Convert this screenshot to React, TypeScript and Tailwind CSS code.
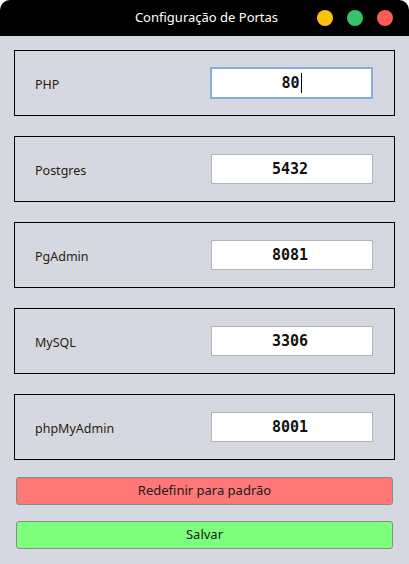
const ports = [
  { name: "PHP", value: "80", focused: true },
  { name: "Postgres", value: "5432" },
  { name: "PgAdmin", value: "8081" },
  { name: "MySQL", value: "3306" },
  { name: "phpMyAdmin", value: "8001" },
];

const App = () => {
  return (
    <div className="w-[409px] h-[564px] bg-white overflow-hidden font-['Noto_Sans',sans-serif]">
      <div className="flex flex-col h-full bg-[#d5d8e0] rounded-t-[10px] overflow-hidden">
        <header className="relative h-[36px] bg-black flex items-center justify-center shrink-0">
          <span className="text-white text-[13px] pl-[4px]">Configuração de Portas</span>
          <div className="absolute right-[16px] top-[10px] flex gap-[14px]">
            <span className="w-[16px] h-[16px] rounded-full bg-[#fcc10e]" />
            <span className="w-[16px] h-[16px] rounded-full bg-[#35c46a]" />
            <span className="w-[16px] h-[16px] rounded-full bg-[#fb5d55]" />
          </div>
        </header>

        <div className="flex flex-col gap-[20px] px-[14px] pt-[14px]">
          {ports.map((port) => (
            <div
              key={port.name}
              className="h-[66px] border border-black flex items-center justify-between pl-[20px] pr-[21px]"
            >
              <span className="text-[12.5px] text-[#2a1a10] pt-[4px]">{port.name}</span>
              <div
                className={
                  port.focused
                    ? "w-[163px] h-[32px] bg-white border-2 border-[#85aedb] flex items-center justify-center"
                    : "w-[162px] h-[30px] bg-white border border-[#b4b4b4] flex items-center justify-center"
                }
              >
                <span className="font-['DejaVu_Sans_Mono',monospace] font-bold text-[15px] text-[#111] mr-[4px]">
                  {port.value}
                </span>
                {port.focused && <span className="w-px h-[20px] bg-black -ml-[3px]" />}
              </div>
            </div>
          ))}
        </div>

        <div className="flex flex-col gap-[16px] px-[16px] pt-[17px]">
          <button className="h-[28px] rounded-[3px] border border-[#8a8a8a] bg-[#ff7878] text-[13px] text-[#1a1a1a]">
            Redefinir para padrão
          </button>
          <button className="h-[28px] rounded-[3px] border border-[#8a8a8a] bg-[#7dfe7d] text-[13px] text-[#1a1a1a]">
            Salvar
          </button>
        </div>
      </div>
    </div>
  );
};

export default App;
